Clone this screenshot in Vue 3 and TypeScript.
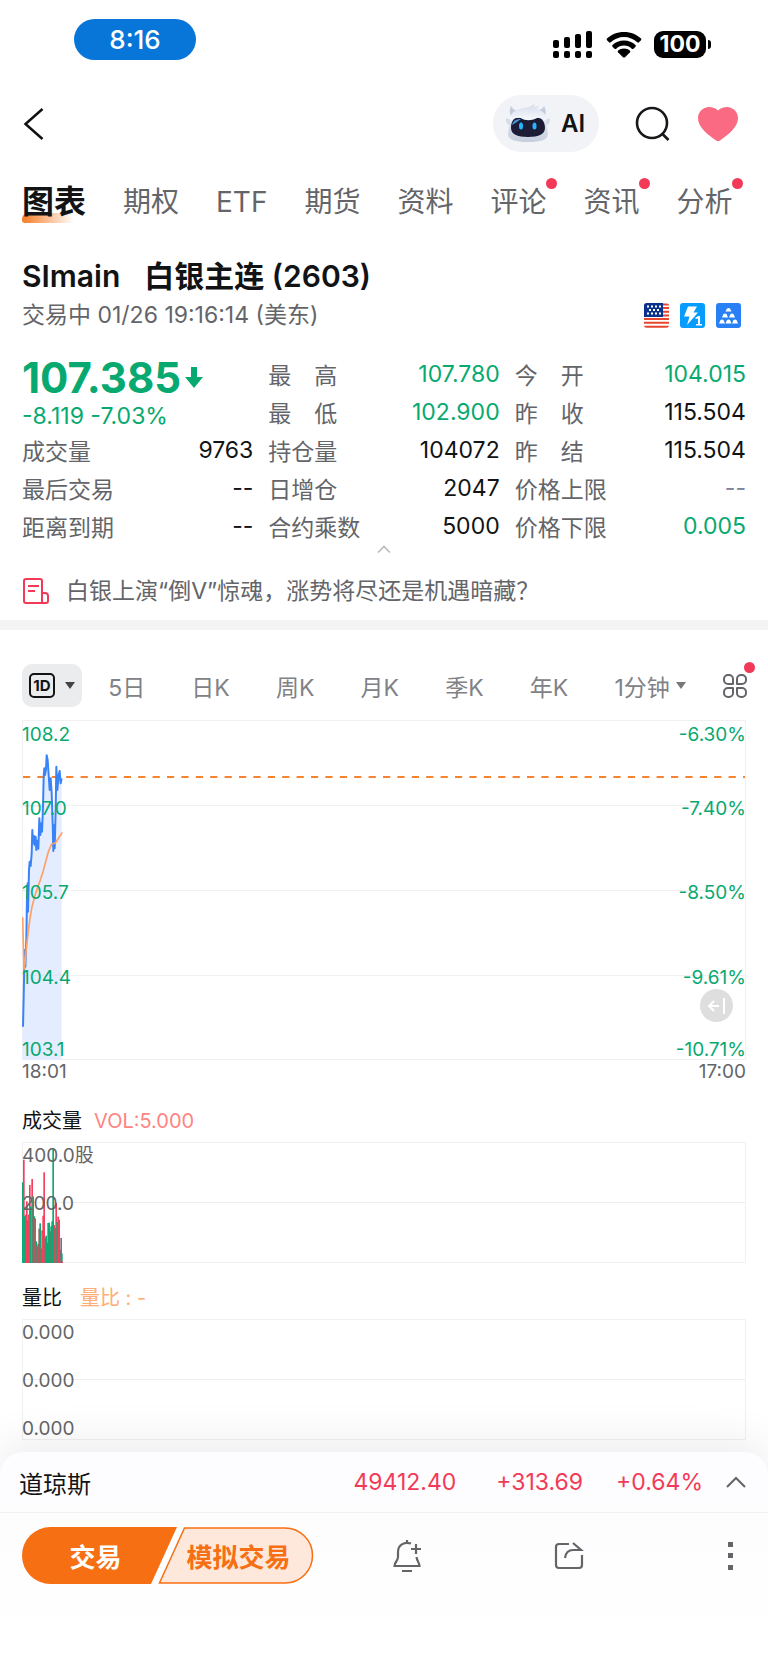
<script setup lang="ts">
import { ref } from 'vue'

type Tone = 'up' | 'down' | 'plain' | 'muted'
interface Stat { label: string; value: string; tone: Tone }
interface Tick { text: string; top: number }
interface Bar { x: number; y: number; color: string }

const tabs = [
  { name: '图表', dot: false },
  { name: '期权', dot: false },
  { name: 'ETF', dot: false },
  { name: '期货', dot: false },
  { name: '资料', dot: false },
  { name: '评论', dot: true },
  { name: '资讯', dot: true },
  { name: '分析', dot: true },
]
const activeTab = ref('图表')

const topStats: Stat[] = [
  { label: '最　高', value: '107.780', tone: 'down' },
  { label: '今　开', value: '104.015', tone: 'down' },
  { label: '最　低', value: '102.900', tone: 'down' },
  { label: '昨　收', value: '115.504', tone: 'plain' },
]
const stats: Stat[] = [
  { label: '成交量', value: '9763', tone: 'plain' },
  { label: '持仓量', value: '104072', tone: 'plain' },
  { label: '昨　结', value: '115.504', tone: 'plain' },
  { label: '最后交易', value: '--', tone: 'plain' },
  { label: '日增仓', value: '2047', tone: 'plain' },
  { label: '价格上限', value: '--', tone: 'muted' },
  { label: '距离到期', value: '--', tone: 'plain' },
  { label: '合约乘数', value: '5000', tone: 'plain' },
  { label: '价格下限', value: '0.005', tone: 'down' },
]

const periods = ['5日', '日K', '周K', '月K', '季K', '年K']

const priceTicks: Tick[] = [
  { text: '108.2', top: 14 },
  { text: '107.0', top: 88 },
  { text: '105.7', top: 172 },
  { text: '104.4', top: 257 },
  { text: '103.1', top: 329 },
]
const percentTicks: Tick[] = [
  { text: '-6.30%', top: 14 },
  { text: '-7.40%', top: 88 },
  { text: '-8.50%', top: 172 },
  { text: '-9.61%', top: 257 },
  { text: '-10.71%', top: 329 },
]
const volumeTicks: Tick[] = [
  { text: '400.0股', top: 13 },
  { text: '200.0', top: 61 },
]
const ratioTicks: Tick[] = [
  { text: '0.000', top: 13 },
  { text: '0.000', top: 61 },
  { text: '0.000', top: 109 },
]

const priceLine =
  '39,950 41,860 43,760 44,720 46,770 49,690 51,560 53,520 54,605 57,480 59,455 62,468 65,430 67,360 69,400 72,378 74,405 77,380 79,420 82,392 85,416 88,325 91,375 94,340 96,365 99,290 101,200 103,175 105,195 108,178 110,136 113,150 116,195 119,240 122,205 125,250 128,340 130,423 132,345 134,415 137,300 139,170 142,240 146,195 149,183 152,220 155,205'
const averageLine =
  '38,622 40,700 42,778 45,760 49,715 54,670 60,625 66,590 74,560 82,535 91,510 99,485 107,455 115,425 125,402 136,399 146,384 157,367'

const red = '#f2415f'
const green = '#0ea873'
const mixed = '#9b665f'
const slate = '#6f7480'
const bars: Bar[] = [
  { x: 36, y: 248, color: green }, { x: 39, y: 180, color: red },
  { x: 42, y: 350, color: green }, { x: 45, y: 345, color: red },
  { x: 48, y: 305, color: red }, { x: 51, y: 362, color: mixed },
  { x: 54, y: 345, color: red }, { x: 57, y: 256, color: red },
  { x: 60, y: 320, color: green }, { x: 64, y: 238, color: red },
  { x: 67, y: 290, color: green }, { x: 70, y: 350, color: green },
  { x: 73, y: 356, color: red }, { x: 76, y: 425, color: green },
  { x: 79, y: 440, color: mixed }, { x: 82, y: 432, color: red },
  { x: 85, y: 387, color: mixed }, { x: 88, y: 371, color: green },
  { x: 91, y: 447, color: mixed }, { x: 94, y: 392, color: red },
  { x: 97, y: 348, color: red }, { x: 100, y: 218, color: red },
  { x: 103, y: 414, color: mixed }, { x: 106, y: 408, color: green },
  { x: 109, y: 429, color: green }, { x: 112, y: 370, color: green },
  { x: 115, y: 369, color: green }, { x: 118, y: 395, color: mixed },
  { x: 121, y: 380, color: green }, { x: 124, y: 365, color: green },
  { x: 127, y: 148, color: green }, { x: 130, y: 376, color: red },
  { x: 133, y: 384, color: mixed }, { x: 136, y: 310, color: red },
  { x: 139, y: 367, color: green }, { x: 142, y: 351, color: red },
  { x: 145, y: 360, color: red }, { x: 148, y: 450, color: mixed },
  { x: 151, y: 415, color: slate }, { x: 153, y: 461, color: green },
  { x: 156, y: 485, color: red },
]
</script>

<template>
  <div class="page">
    <header class="status">
      <span class="clock">8:16</span>
      <div class="status-icons">
        <svg width="42" height="28" viewBox="0 0 42 28" aria-hidden="true">
          <rect x="1" y="9" width="6" height="8" rx="2" /><rect x="12" y="6" width="6" height="11" rx="2" />
          <rect x="23" y="3" width="6" height="14" rx="2" /><rect x="34" y="0" width="6" height="17" rx="2" />
          <rect x="1" y="20" width="6" height="7" rx="2" /><rect x="12" y="20" width="6" height="7" rx="2" />
          <rect x="23" y="20" width="6" height="7" rx="2" /><rect x="34" y="20" width="6" height="7" rx="2" />
        </svg>
        <svg width="36" height="26" viewBox="0 0 36 26" aria-hidden="true">
          <path d="M18 0C11 0 5 2.600 1 6.600q-.8 .9 0 1.700l2 2q.8 .8 1.700 0C8.500 7 13 5 18 5s9.500 2 13.300 5.300q.9 .8 1.700 0l2-2q.8-.8 0-1.700C31 2.600 25 0 18 0z" />
          <path d="M18 8.500c-4.500 0-8.500 1.700-11.500 4.500q-.8 .9 0 1.700l2 2q.8 .7 1.700 0c2.200-2 4.900-3.200 7.800-3.200s5.600 1.200 7.800 3.200q.9 .7 1.700 0l2-2q.8-.8 0-1.700c-3-2.800-7-4.500-11.500-4.500z" />
          <path d="M18 16.500c-2.300 0-4.400 .8-6 2.200q-.8 .8 0 1.600l5 4.900q1 .8 2 0l5-4.900q.8-.8 0-1.600c-1.600-1.400-3.700-2.200-6-2.200z" />
        </svg>
        <span class="battery">100</span>
      </div>
    </header>

    <nav class="navbar">
      <button class="icon-btn back" type="button" aria-label="返回">
        <svg width="24" height="34" viewBox="0 0 24 34"><path d="M20.500 2 3.500 17l17 15" fill="none" stroke="#111" stroke-width="2.500" /></svg>
      </button>
      <div class="nav-right">
        <button class="ai" type="button">
          <svg width="46" height="40" viewBox="0 0 46 40" aria-hidden="true">
            <defs>
              <linearGradient id="shell" x1="0" y1="0" x2="0" y2="1">
                <stop offset="0" stop-color="#e9eef6" /><stop offset="1" stop-color="#c6cedd" />
              </linearGradient>
              <linearGradient id="hair" x1="0" y1="0" x2="0" y2="1">
                <stop offset="0" stop-color="#d5dcea" /><stop offset="1" stop-color="#f8faff" />
              </linearGradient>
            </defs>
            <path d="M6 2c1 2 3 4 6 5l-2 6-4-1C4 8 5 5 6 2zM39 2c-1 2-2 3-5 4l2 6 4 0c1-3 1-7-1-10z" fill="#c3ccdd" />
            <path d="M1 15c2-1 4 0 5 2l-1 4c-3 0-4-3-4-6zM45 15c-2-1-4 0-5 2l1 4c3 0 4-3 4-6z" fill="#d5dbe7" />
            <path d="M4 22C4 13 12 9 23 9s19 4 19 13l1 8c0 6-8 8-20 8S3 36 3 30z" fill="url(#shell)" />
            <path d="M6 24c0-8 4-11 9-10 5 1 11 1 16 0 5-1 9 3 9 10 0 6-6 9-17 9S6 30 6 24z" fill="#1d1c36" />
            <path d="M7 21c1-4 4-6 9-6-3 2-5 4-9 6z" fill="#4796dc" />
            <path d="M5 17C4 9 11 5 19 4c4-1 7-1 10-4 1 1 0 2 0 3l5-1-2 3c6 2 10 5 9 12-3-3-6-4-9-3-6 3-12 3-16 0-4-1-8 0-11 3z" fill="url(#hair)" />
            <ellipse cx="16" cy="22" rx="2" ry="3.500" fill="#23b7ff" /><ellipse cx="29.500" cy="22" rx="2" ry="3.500" fill="#23b7ff" />
          </svg>
          <span>AI</span>
        </button>
        <button class="icon-btn search" type="button" aria-label="搜索">
          <svg width="36" height="36" viewBox="0 0 36 36" fill="none" stroke="#16181b" stroke-width="2.600"><circle cx="17" cy="17" r="15" /><path d="m27.500 28 6 6" /></svg>
        </button>
        <button class="icon-btn" type="button" aria-label="自选">
          <svg width="40" height="34" viewBox="0 0 40 34"><path d="M20 3.500C23 .8 26 0 29 0c6 0 11 5 11 11 0 9-9 16-18 22.500q-2 1-4 0C9 27 0 20 0 11 0 5 5 0 11 0c3 0 6 .8 9 3.500z" fill="#fa6a82" /></svg>
        </button>
      </div>
    </nav>

    <nav class="tabs">
      <button v-for="t in tabs" :key="t.name" type="button" :class="['tab', { active: t.name === activeTab }]" @click="activeTab = t.name">
        {{ t.name }}<i v-if="t.dot" class="dot"></i>
      </button>
    </nav>

    <section class="summary">
      <h1><span>SImain</span><span>白银主连 (2603)</span></h1>
      <div class="session">
        <span>交易中 01/26 19:16:14 (美东)</span>
        <div class="badges">
          <svg width="25" height="25" viewBox="0 0 25 25" role="img" aria-label="美国">
            <defs><clipPath id="flag"><rect width="25" height="25" rx="3" /></clipPath></defs>
            <g clip-path="url(#flag)">
              <rect width="25" height="25" fill="#fff" />
              <path d="M0 1.500h25M0 5h25M0 8.700h25M0 12.400h25M0 16.100h25M0 19.800h25M0 23.800h25" stroke="#e8452f" stroke-width="2" />
              <rect width="19" height="14" fill="#0a318c" />
              <path d="M3 3.500h14M3 10.500h14" stroke="#fff" stroke-width="2" stroke-dasharray="2 2" /><path d="M5 7h11" stroke="#fff" stroke-width="2" stroke-dasharray="2 2" />
            </g>
          </svg>
          <svg width="25" height="25" viewBox="0 0 25 25" role="img" aria-label="一级行情">
            <rect width="25" height="25" rx="3" fill="#069dff" />
            <path d="M8 3.500h9L13.500 9.500H18L7 22l2.500-8.500H4z" fill="#fff" />
            <path d="M15.500 14.500l3-1.500h1.500v8h2v1.500h-6V21h2v-5.500l-2.500.5z" fill="#fff" />
          </svg>
          <svg width="25" height="25" viewBox="0 0 25 25" role="img" aria-label="贵金属">
            <rect width="25" height="25" rx="3" fill="#2880f4" />
            <path d="M9.500 8.500 11 5.500q1.500-1 3 0l1.500 3zM6 14.500l1.500-3.500q1.500-1 3 0l1.500 3.500zM13 14.500l1.500-3.500q1.500-1 3 0l1.500 3.500zM3 20.500l1.500-3.500q1.500-1 3 0L9 20.500zM9.500 20.500 11 17q1.500-1 3 0l1.500 3.500zM16 20.500l1.500-3.500q1.500-1 3 0l1.500 3.500z" fill="#fff" />
          </svg>
        </div>
      </div>

      <div class="quote">
        <div class="price">
          <div class="last">107.385
            <svg width="18" height="22" viewBox="0 0 18 22" aria-hidden="true"><path d="M6 0h6v10h6L9 21 0 10h6z" fill="#07a970" /></svg>
          </div>
          <div class="change">-8.119 -7.03%</div>
        </div>
        <div v-for="s in [...topStats, ...stats]" :key="s.label" class="stat">
          <span class="label">{{ s.label }}</span><span :class="s.tone">{{ s.value }}</span>
        </div>
      </div>
      <button class="fold" type="button" aria-label="收起">
        <svg width="14" height="8" viewBox="0 0 14 8"><path d="m1 7.500 6-6 6 6" fill="none" stroke="#bbb" stroke-width="1.600" /></svg>
      </button>
      <a class="news" href="#">
        <svg width="28" height="28" viewBox="0 0 28 28" fill="none" stroke="#f23a58" stroke-width="2" aria-hidden="true">
          <path d="M20 26H4q-2 0-2-2V4q0-2 2-2h14q2 0 2 2zM6 9h11M6 14h7M20 16h3q3 0 3 3v5q0 2-2 2h-4" />
        </svg>
        <span>白银上演“倒V”惊魂，涨势将尽还是机遇暗藏？</span>
      </a>
    </section>

    <div class="band"></div>

    <section class="charts">
      <div class="periods">
        <button class="period-main" type="button" aria-label="分时">
          <span class="oned">1D</span>
          <svg width="10" height="7" viewBox="0 0 10 7"><path d="M0 0h10L5 7z" fill="#444" /></svg>
        </button>
        <button v-for="p in periods" :key="p" type="button" class="period">{{ p }}</button>
        <button type="button" class="period minute">1分钟
          <svg width="10" height="7" viewBox="0 0 10 7" aria-hidden="true"><path d="M0 0h10L5 7z" fill="#777" /></svg>
        </button>
        <button type="button" class="grid-btn" aria-label="更多指标">
          <svg width="26" height="26" viewBox="0 0 26 26" fill="none" stroke="#646569" stroke-width="2">
            <path d="M11 11H6A4 4 0 0 1 2 7V6A4 4 0 0 1 6 2H7A4 4 0 0 1 11 6zM15 11V6A4 4 0 0 1 19 2H20A4 4 0 0 1 24 6V7A4 4 0 0 1 20 11zM11 15V20A4 4 0 0 1 7 24H6A4 4 0 0 1 2 20V19A4 4 0 0 1 6 15zM15 15H20A4 4 0 0 1 24 19V20A4 4 0 0 1 20 24H19A4 4 0 0 1 15 20z" stroke-linejoin="round" />
          </svg>
          <i class="dot"></i>
        </button>
      </div>

      <div class="plot main-plot">
        <svg class="series" width="41" height="339" viewBox="36 33 123 1017" aria-hidden="true">
          <polygon :points="`37,950 ${priceLine} 155,1050 37,1050`" fill="#e4edff" />
          <path d="M36 288h119M36 542h119M36 796h119" stroke="#dbe4f5" stroke-width="3" />
        </svg>
        <svg class="dash" width="100%" height="4" aria-hidden="true"><line x1="0" x2="100%" y1="2" y2="2" stroke="#f6842f" stroke-width="2" stroke-dasharray="7.200 7.200" /></svg>
        <svg class="series" width="41" height="339" viewBox="36 33 123 1017" fill="none" stroke-linejoin="round" aria-hidden="true">
          <polyline :points="priceLine" stroke="#3a82f7" stroke-width="6" />
          <polyline :points="averageLine" stroke="#ffa066" stroke-width="5" />
        </svg>
        <span v-for="t in priceTicks" :key="t.text" class="tick down" :style="{ top: t.top + 'px' }">{{ t.text }}</span>
        <span v-for="t in percentTicks" :key="t.text" class="tick right down" :style="{ top: t.top + 'px' }">{{ t.text }}</span>
        <button class="collapse" type="button" aria-label="展开侧栏">
          <svg width="20" height="18" viewBox="0 0 20 18" fill="none" stroke="#fff" stroke-width="2"><path d="M12 9H2M7 4 2 9l5 5M17 1v16" /></svg>
        </button>
      </div>
      <div class="times"><span>18:01</span><span>17:00</span></div>

      <div class="caption volume-caption"><span>成交量</span><span class="vol">VOL:5.000</span></div>
      <div class="plot sub-plot">
        <svg class="series" width="41" height="120" viewBox="36 130 123 360" aria-hidden="true">
          <rect v-for="b in bars" :key="b.x" :x="b.x" :y="b.y" width="5" :height="490 - b.y" :fill="b.color" />
        </svg>
        <span v-for="t in volumeTicks" :key="t.text" class="tick" :style="{ top: t.top + 'px' }">{{ t.text }}</span>
      </div>

      <div class="caption ratio-caption"><span>量比</span><span class="ratio">量比 : -</span></div>
      <div class="plot sub-plot">
        <span v-for="t in ratioTicks" :key="t.top" class="tick" :style="{ top: t.top + 'px' }">{{ t.text }}</span>
      </div>
    </section>

    <footer class="sheet">
      <div class="index">
        <strong>道琼斯</strong>
        <span>49412.40</span><span class="diff">+313.69</span><span class="pct">+0.64%</span>
        <button class="icon-btn" type="button" aria-label="展开指数">
          <svg width="20" height="14" viewBox="0 0 20 14"><path d="m1 12 9-9 9 9" fill="none" stroke="#646569" stroke-width="2" /></svg>
        </button>
      </div>
      <div class="actions">
        <div class="trade">
          <button class="real" type="button">交易</button>
          <button class="demo" type="button">
            <svg viewBox="0 0 156 57" aria-hidden="true"><path d="M26.500 1H127a27.500 27.500 0 0 1 0 55H1.500z" fill="#fde8db" stroke="#f66f12" stroke-width="1.500" /></svg>
            <span>模拟交易</span>
          </button>
        </div>
        <div class="tools">
          <button class="icon-btn" type="button" aria-label="提醒">
            <svg width="30" height="34" viewBox="0 0 30 34" fill="none" stroke="#646569" stroke-width="2.200">
              <path d="M19 4.500C12 2.500 6 6 6 13v5c0 4-3.500 5-3.500 9h25c0-3-2.500-5-3-9M15 1v3M10 32h10M24 5v10M19 10h10" />
            </svg>
          </button>
          <button class="icon-btn" type="button" aria-label="分享">
            <svg width="30" height="30" viewBox="0 0 30 30" fill="none" stroke="#646569" stroke-width="2.200">
              <path d="M15 3H5Q2 3 2 6v18q0 3 3 3h20q3 0 3-3V14M19 2l8 7H19q-7 0-8 8" />
            </svg>
          </button>
          <button class="icon-btn" type="button" aria-label="更多">
            <svg width="30" height="30" viewBox="0 0 30 30" fill="#646569"><path d="M12 1h5v5h-5zM12 12h5v5h-5zM12 24h5v5h-5z" /></svg>
          </button>
        </div>
      </div>
    </footer>
  </div>
</template>

<style>
body { margin: 0; background: #fff; }
</style>

<style scoped>
.page {
  min-height: 100vh;
  display: flex;
  flex-direction: column;
  box-sizing: border-box;
  background: #fff;
  color: #111315;
  font-family: Inter, "Noto Sans CJK SC", sans-serif;
  font-size: 23px;
}
button {
  border: 0;
  padding: 0;
  margin: 0;
  background: none;
  color: inherit;
  font: inherit;
  white-space: nowrap;
}
svg { display: block; flex: none; }
.icon-btn { display: flex; }
.status {
  display: flex;
  justify-content: space-between;
  padding: 19px 62px 0 74px;
}
.clock {
  width: 122px;
  line-height: 41px;
  border-radius: 21px;
  background: #0875d8;
  color: #fff;
  font-size: 26px;
  font-weight: 500;
  text-align: center;
}
.status-icons {
  display: flex;
  align-items: center;
  gap: 12px;
  padding-top: 10px;
}
.battery {
  position: relative;
  width: 52px;
  line-height: 27px;
  border-radius: 9px;
  background: #000;
  color: #fff;
  font-size: 23px;
  font-weight: 700;
  text-align: center;
}
.battery::after {
  content: "";
  position: absolute;
  right: -5px;
  top: 9px;
  width: 3px;
  height: 9px;
  border-radius: 0 4px 4px 0;
  background: #000;
}
.navbar {
  display: flex;
  justify-content: space-between;
  align-items: center;
  padding: 35px 30px 0 22px;
}
.nav-right { display: flex; align-items: center; }
.ai {
  display: flex;
  align-items: center;
  gap: 10px;
  width: 106px;
  height: 57px;
  box-sizing: border-box;
  padding-left: 12px;
  border-radius: 29px;
  background: #f1f3f6;
  font-size: 24px;
  font-weight: 600;
}
.search { margin: 0 27px 0 36px; }
.tabs {
  display: flex;
  gap: 37px;
  padding: 28px 22px 0;
  line-height: 44px;
  font-size: 28px;
  color: #646569;
}
.tab { position: relative; }
.tab.active {
  z-index: 0;
  font-size: 32px;
  font-weight: 700;
  color: #111315;
}
.tab.active::before {
  content: "";
  position: absolute;
  z-index: -1;
  left: 0;
  bottom: 1px;
  width: 52px;
  height: 10px;
  border-radius: 6px 0 0 3px;
  background: linear-gradient(90deg, #f77c25, #fff);
}
.dot {
  position: absolute;
  width: 11px;
  height: 11px;
  border-radius: 50%;
  background: #f23a58;
  top: -2px;
  right: -10px;
}
.summary { padding: 0 22px; }
h1 {
  display: flex;
  gap: 24px;
  margin: 32px 0 0;
  font-size: 30px;
  line-height: 40px;
  font-weight: 600;
}
.session {
  display: flex;
  justify-content: space-between;
  align-items: center;
  line-height: 38px;
  padding-right: 5px;
  color: #646569;
}
.badges { display: flex; gap: 11px; }
.quote {
  display: grid;
  grid-template-columns: repeat(3, minmax(0, 1fr));
  grid-auto-rows: 38px;
  column-gap: 15px;
  margin-top: 21px;
}
.price { grid-row: span 2; color: #07a970; white-space: nowrap; }
.last {
  display: flex;
  align-items: center;
  gap: 4px;
  font-size: 42px;
  line-height: 46px;
  font-weight: 700;
}
.change { line-height: 30px; }
.stat {
  display: flex;
  justify-content: space-between;
  align-items: center;
}
.label { color: #646569; }
.down { color: #07a970; }
.up { color: #f23a58; }
.muted { color: #7c86a0; }
.fold { display: flex; margin: 0 auto; }
.news {
  display: flex;
  align-items: center;
  gap: 16px;
  padding: 22px 0 13px;
  line-height: 32px;
  color: #646569;
  text-decoration: none;
}
.band { height: 10px; background: #f4f4f5; }
.charts { padding: 0 22px; }
.periods {
  display: flex;
  align-items: center;
  justify-content: space-between;
  margin: 34px -2px 13px 0;
  height: 43px;
  color: #818286;
}
.period-main {
  display: flex;
  align-items: center;
  justify-content: center;
  gap: 10px;
  width: 60px;
  height: 43px;
  margin-right: -20px;
  border-radius: 10px;
  background: #ebecee;
}
.oned {
  width: 22px;
  line-height: 21px;
  border: 2px solid #111315;
  border-radius: 5px;
  color: #111315;
  font-size: 15px;
  font-weight: 700;
  text-align: center;
}
.minute { display: flex; align-items: center; gap: 6px; margin-right: -10px; }
.grid-btn { position: relative; display: flex; }
.grid-btn .dot { top: -11px; right: -7px; }
.plot {
  position: relative;
  box-sizing: border-box;
  font-size: 19px;
  line-height: 20px;
  border: 1px solid #f0f0f1;
  color: #646569;
}
.main-plot {
  height: 340px;
  background: repeating-linear-gradient(#fff 0 84px, #f1f1f2 84px 85px);
}
.sub-plot {
  height: 121px;
  background: linear-gradient(#eee, #eee) center / 100% 1px no-repeat;
}
.series { position: absolute; left: -1px; top: 0; }
.dash { position: absolute; left: 0; top: 54px; }
.tick { position: absolute; left: -1px; transform: translateY(-50%); }
.tick.right { left: auto; right: -1px; }
.tick.down { color: #07a970; }
.collapse {
  position: absolute;
  right: 12px;
  top: 268px;
  display: grid;
  place-items: center;
  width: 33px;
  height: 33px;
  border-radius: 50%;
  background: #dedede;
}
.times {
  display: flex;
  justify-content: space-between;
  font-size: 19px;
  line-height: 24px;
  color: #646569;
}
.caption { display: flex; font-size: 20px; line-height: 28px; }
.volume-caption { gap: 12px; padding: 23px 0 7px; }
.ratio-caption { gap: 18px; padding: 21px 0 7px; }
.vol { color: #ff8483; }
.ratio { color: #ffad75; }
.sheet {
  position: relative;
  flex: 1;
  margin-top: 12px;
  border-radius: 24px 24px 0 0;
  background: linear-gradient(#fdfcfe, #fefefe 130px, #fff);
  box-shadow: 0 -12px 44px rgba(0, 0, 0, 0.07);
}
.index {
  display: flex;
  align-items: center;
  height: 60px;
  padding: 0 22px 0 19px;
  border-bottom: 1px solid #f1f1f4;
  color: #f23a58;
}
.index strong {
  flex: 1;
  font-size: 24px;
  font-weight: 400;
  color: #111315;
}
.diff { margin: 0 33px 0 40px; }
.pct { margin-right: 23px; }
.actions {
  display: flex;
  align-items: center;
  padding: 14px 22px;
}
.trade { display: flex; width: 292px; font-size: 26px; font-weight: 700; }
.real {
  width: 155px;
  height: 57px;
  padding-right: 8px;
  border-radius: 29px 0 0 29px;
  background: #f66f12;
  color: #fff;
  clip-path: polygon(0 0, 100% 0, calc(100% - 26px) 100%, 0 100%);
}
.demo {
  position: relative;
  width: 156px;
  height: 57px;
  margin-left: -19px;
  padding-left: 5px;
  color: #f66f12;
}
.demo svg { position: absolute; inset: 0; width: 100%; height: 100%; }
.demo span { position: relative; }
.tools {
  flex: 1;
  display: flex;
  align-items: center;
  justify-content: space-between;
  margin-left: 78px;
}
</style>
